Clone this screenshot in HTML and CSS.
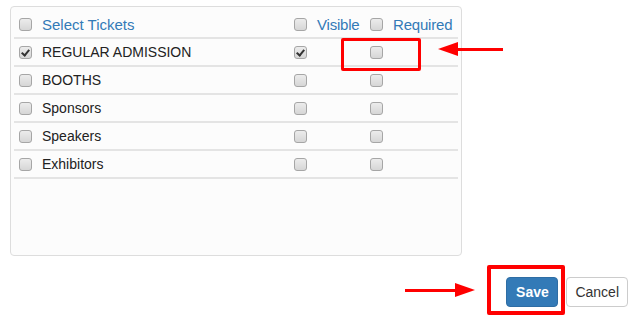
FILE: index.html
```html
<!DOCTYPE html>
<html lang="en">
<head>
  <meta charset="UTF-8" />
  <meta name="viewport" content="width=device-width, initial-scale=1.0"/>
  <title>Select Tickets</title>
  <link rel="stylesheet" href="styles.css">
</head>
<body>
  <div class="page">
    <!-- Tickets table -->
    <div class="panel">
      <div class="row head">
        <label class="cell"><input type="checkbox" /> <span>Select Tickets</span></label>
        <label class="cell"><input type="checkbox" /> <span>Visible</span></label>
        <label class="cell"><input type="checkbox" /> <span>Required</span></label>
      </div>
      <div class="row">
        <label class="cell"><input type="checkbox" checked /> <span>REGULAR ADMISSION</span></label>
        <div class="cell"><input type="checkbox" checked /></div>
        <div class="cell"><input type="checkbox" /></div>
      </div>
      <div class="row">
        <label class="cell"><input type="checkbox" /> <span>BOOTHS</span></label>
        <div class="cell"><input type="checkbox" /></div>
        <div class="cell"><input type="checkbox" /></div>
      </div>
      <div class="row">
        <label class="cell"><input type="checkbox" /> <span>Sponsors</span></label>
        <div class="cell"><input type="checkbox" /></div>
        <div class="cell"><input type="checkbox" /></div>
      </div>
      <div class="row">
        <label class="cell"><input type="checkbox" /> <span>Speakers</span></label>
        <div class="cell"><input type="checkbox" /></div>
        <div class="cell"><input type="checkbox" /></div>
      </div>
      <div class="row">
        <label class="cell"><input type="checkbox" /> <span>Exhibitors</span></label>
        <div class="cell"><input type="checkbox" /></div>
        <div class="cell"><input type="checkbox" /></div>
      </div>
    </div>

    <!-- Buttons -->
    <div class="actions">
      <button type="button" class="btn btn-primary">Save</button>
      <button type="button" class="btn">Cancel</button>
    </div>

    <!-- Annotations -->
    <div class="mark mark-required"></div>
    <div class="mark mark-save"></div>
    <div class="arrow arrow-left"></div>
    <div class="arrow arrow-right"></div>
  </div>
</body>
</html>
```

FILE: styles.css
```css
body {
  margin: 0;
  background: #fff;
  font-family: "Liberation Sans", Arial, sans-serif;
  font-size: 14px;
  color: #222;
}
.page {
  position: relative;
  width: 644px;
  height: 319px;
  padding: 6px 0 0 10px;
  box-sizing: border-box;
}
.panel {
  width: 452px;
  height: 250px;
  box-sizing: border-box;
  border: 1px solid #ddd;
  border-radius: 4px;
  background: #fcfcfc;
  padding: 4px 3px 0 3px;
}
.row {
  display: grid;
  grid-template-columns: 274px 76px 1fr;
  height: 26px;
  border-bottom: 2px solid #e4e4e4;
}
.cell {
  display: flex;
  align-items: center;
  gap: 10px;
  padding-left: 5px;
}
.row .cell + .cell {
  padding-left: 6px;
}
.head .cell {
  color: #337ab7;
  font-size: 15px;
}
.head .cell + .cell {
  gap: 10px;
  letter-spacing: -0.2px;
}

input[type="checkbox"] {
  -webkit-appearance: none;
  appearance: none;
  position: relative;
  margin: 0;
  width: 13px;
  height: 13px;
  flex: none;
  border: 1px solid #a6a6a6;
  border-radius: 3px;
  background: linear-gradient(#ececec, #d6d6d6);
  box-sizing: border-box;
}
input[type="checkbox"]:checked::after {
  content: "";
  position: absolute;
  left: 3px;
  top: 1px;
  width: 3px;
  height: 6px;
  border-right: 2px solid #333;
  border-bottom: 2px solid #333;
  transform: rotate(40deg);
}

.actions {
  display: flex;
  justify-content: flex-end;
  gap: 8px;
  padding: 21px 16px 0 0;
}
.btn {
  height: 30px;
  padding: 0 8px;
  border: 1px solid #ccc;
  border-radius: 4px;
  background: #fff;
  color: #333;
  font-family: inherit;
  font-size: 14px;
}
.btn-primary {
  width: 52px;
  padding: 0;
  background: #337ab7;
  border-color: #2e6da4;
  color: #fff;
  font-weight: bold;
}

/* red annotations drawn over the screenshot */
.mark {
  position: absolute;
  border: 3px solid #f00;
  border-radius: 2px;
  box-sizing: border-box;
}
.mark-required {
  left: 341px;
  top: 38px;
  width: 80px;
  height: 33px;
}
.mark-save {
  left: 487px;
  top: 265px;
  width: 78px;
  height: 50px;
  border-width: 4px;
}
.arrow {
  position: absolute;
  height: 3px;
  background: #f00;
}
.arrow::before {
  content: "";
  position: absolute;
  top: -6px;
  border-top: 7.5px solid transparent;
  border-bottom: 7.5px solid transparent;
}
.arrow-left {
  left: 456px;
  top: 48px;
  width: 47px;
}
.arrow-left::before {
  left: -18px;
  border-right: 20px solid #f00;
}
.arrow-right {
  left: 405px;
  top: 289px;
  width: 52px;
}
.arrow-right::before {
  right: -18px;
  border-left: 20px solid #f00;
}
```
